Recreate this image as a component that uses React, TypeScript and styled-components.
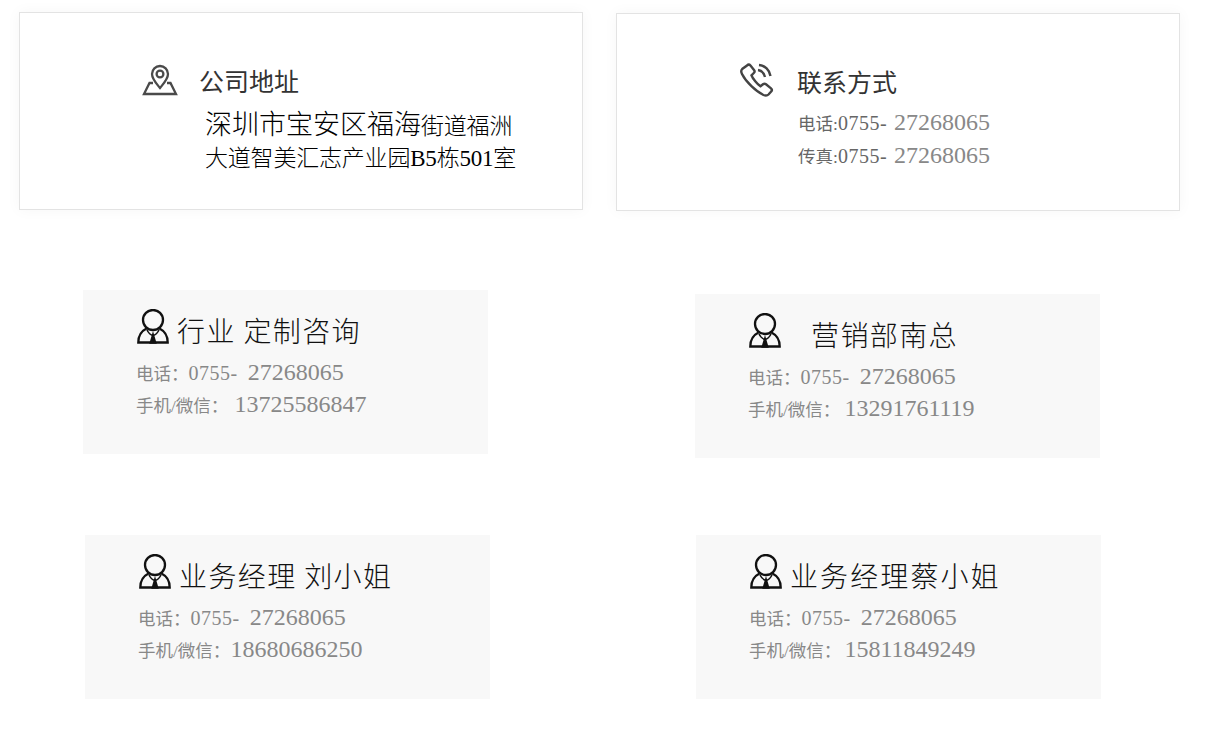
import styled, { createGlobalStyle } from 'styled-components';

const GlobalStyle = createGlobalStyle`
  html, body {
    margin: 0;
    padding: 0;
    background: #fff;
    font-family: "Liberation Serif", "Noto Sans CJK SC", serif;
  }
`;

const Page = styled.div`
  width: 1206px;
  height: 747px;
  overflow: hidden;
`;

const Row = styled.div<{ $height: number }>`
  display: flex;
  align-items: flex-start;
  height: ${p => p.$height}px;
`;

const Card = styled.div<{ $left: number; $top: number }>`
  box-sizing: border-box;
  width: 564px;
  height: 198px;
  margin-left: ${p => p.$left}px;
  margin-top: ${p => p.$top}px;
  border: 1px solid #e3e3e3;
  background: #fff;
  box-shadow: 0 0 14px rgba(0, 0, 0, 0.04);
`;

const CardHead = styled.div<{ $pad: number; $gap: number; $top: number }>`
  display: flex;
  align-items: center;
  gap: ${p => p.$gap}px;
  padding: ${p => p.$top}px 0 0 ${p => p.$pad}px;
`;

const CardTitle = styled.div`
  font-family: "Noto Sans CJK SC", sans-serif;
  font-size: 25px;
  line-height: 36px;
  color: #333;
`;

const Address = styled.div`
  margin: 10px 0 0 185px;
  color: #000;
  font-family: "Liberation Serif", "Noto Sans CJK SC", serif;
  font-weight: 300;
  letter-spacing: -0.2px;
`;

const AddressLine = styled.div<{ $size: number; $height: number }>`
  font-size: ${p => p.$size}px;
  line-height: ${p => p.$height}px;
  white-space: nowrap;
`;

const Big = styled.span`
  font-size: 27px;
  letter-spacing: 0;
`;

const Contacts = styled.div`
  margin: 7px 0 0 181px;
  height: 58px;
  overflow: hidden;
`;

const Line = styled.div`
  display: flex;
  align-items: baseline;
  height: 33px;
  line-height: 33px;
  white-space: nowrap;
  color: #666;
  font-size: 20px;
`;

const Label = styled.span`
  font-size: 17.5px;
`;

const PanelLabel = styled(Label)`
  margin-left: -1px;
`;

const AreaCode = styled.span`
  letter-spacing: 0.5px;
`;

const Num = styled.span<{ $gap: number }>`
  font-size: 24px;
  color: #888;
  margin-left: ${p => p.$gap}px;
`;

const Panel = styled.div<{ $left: number; $top: number }>`
  box-sizing: border-box;
  width: 405px;
  height: 164px;
  margin-left: ${p => p.$left}px;
  margin-top: ${p => p.$top}px;
  padding: 16px 0 0 54px;
  background: #f8f8f8;
`;

const PanelHead = styled.div`
  display: flex;
  align-items: center;
  height: 48px;
  gap: 8px;
  margin-bottom: 2px;
`;

const PanelTitle = styled.div<{ $indent?: number; $spacing?: number }>`
  font-size: 28px;
  letter-spacing: ${p => p.$spacing ?? 1.4}px;
  line-height: 48px;
  color: #111;
  white-space: pre;
  margin-left: ${p => p.$indent ?? 0}px;
  font-family: "Noto Sans CJK SC", sans-serif;
  font-weight: 300;
`;

const PanelLine = styled(Line)`
  color: #888;
  height: 32px;
  line-height: 32px;
`;

const PersonSvg = styled.svg`
  flex: none;
  margin-bottom: 8px;
`;

const PinSvg = styled.svg`
  flex: none;
  margin-top: -2px;
`;

const PhoneSvg = styled.svg`
  flex: none;
`;

const PinIcon = () => (
  <PinSvg width="36" height="34" viewBox="0 0 36 34" fill="none" stroke="#4a4a4a" strokeWidth="2.300">
    <path d="M18 26c-4-5-8-9-8-14a8 8 0 0 1 16 0c0 5-4 9-8 14z" />
    <circle cx="18" cy="12" r="3.400" />
    <path d="M11 21H7.500L2 32h32l-5.500-11H25" />
  </PinSvg>
);

const PhoneIcon = () => (
  <PhoneSvg width="36" height="36" viewBox="0 0 36 36" fill="none" stroke="#444" strokeWidth="2.400">
    <path d="M8 2.500c1-1 2.500-1 3.500 0l3.500 4.500c.8 1 .6 2.200-.2 3l-2.300 2.300c1 3 6 9 9 11l2.500-2c1-.8 2-.8 3 0l5 4c1 .9 1 2.300.2 3.200l-2.700 3c-1 1-3 1.300-5 .5C17 28.500 7 19 3 11c-1-2-.8-4 .2-5z" />
    <path d="M19 7c3.500 .5 6 3 7 7" />
    <path d="M20 2c6 .5 10.500 5 11.500 11" />
  </PhoneSvg>
);

const PersonIcon = () => (
  <PersonSvg width="32" height="35" viewBox="0 0 32 35" fill="none" stroke="#111" strokeWidth="2.300">
    <circle cx="16" cy="11" r="10" />
    <path d="M9.500 19.500C4.500 22 1.300 27 1.300 33.500h29.400C30.700 27 27.500 22 22.500 19.500" />
    <path d="M10 21c1.500 3 4 5 6 5.500 2-.5 4.500-2.500 6-5.500" strokeWidth="1.600" />
    <path d="M16 26l-2.200 7.500h4.400z" fill="#111" />
  </PersonSvg>
);

type Person = {
  title: string;
  indent?: number;
  spacing?: number;
  phone: string;
  mobile: string;
  mobileGap: number;
  left: number;
  top: number;
};

const PersonPanel = ({ title, indent, spacing, phone, mobile, mobileGap, left, top }: Person) => (
  <Panel $left={left} $top={top}>
    <PanelHead>
      <PersonIcon />
      <PanelTitle $indent={indent} $spacing={spacing}>{title}</PanelTitle>
    </PanelHead>
    <PanelLine>
      <PanelLabel>电话：</PanelLabel>
      <AreaCode>0755-</AreaCode>
      <Num $gap={10}>{phone}</Num>
    </PanelLine>
    <PanelLine>
      <PanelLabel>手机/微信：</PanelLabel>
      <Num $gap={mobileGap}>{mobile}</Num>
    </PanelLine>
  </Panel>
);

export default function App() {
  return (
    <Page>
      <GlobalStyle />
      <Row $height={240}>
        <Card $left={19} $top={12}>
          <CardHead $pad={122} $gap={21} $top={49}>
            <PinIcon />
            <CardTitle>公司地址</CardTitle>
          </CardHead>
          <Address>
            <AddressLine $size={23} $height={34}>
              <Big>深圳市宝安区福海</Big>街道福洲
            </AddressLine>
            <AddressLine $size={23} $height={30}>大道智美汇志产业园B5栋501室</AddressLine>
          </Address>
        </Card>
        <Card $left={33} $top={13}>
          <CardHead $pad={122} $gap={22} $top={49}>
            <PhoneIcon />
            <CardTitle>联系方式</CardTitle>
          </CardHead>
          <Contacts>
            <Line>
              <Label>电话:</Label>
              <AreaCode>0755-</AreaCode>
              <Num $gap={7}>27268065</Num>
            </Line>
            <Line>
              <Label>传真:</Label>
              <AreaCode>0755-</AreaCode>
              <Num $gap={7}>27268065</Num>
            </Line>
          </Contacts>
        </Card>
      </Row>
      <Row $height={270}>
        <PersonPanel left={83} top={50} title="行业 定制咨询" phone="27268065" mobile="13725586847" mobileGap={6} />
        <PersonPanel left={207} top={54} title="营销部南总" indent={22} phone="27268065" mobile="13291761119" mobileGap={4} />
      </Row>
      <Row $height={237}>
        <PersonPanel left={85} top={25} title="业务经理 刘小姐" phone="27268065" mobile="18680686250" mobileGap={0} />
        <PersonPanel left={206} top={25} title="业务经理蔡小姐" spacing={2.1} phone="27268065" mobile="15811849249" mobileGap={3} />
      </Row>
    </Page>
  );
}
